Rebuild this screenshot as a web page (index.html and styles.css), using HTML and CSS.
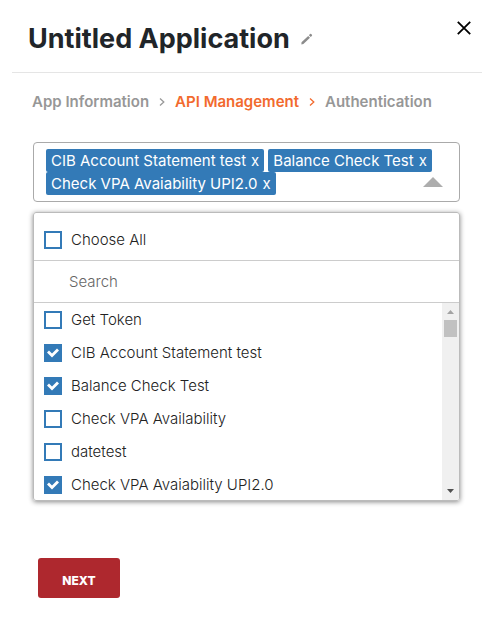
FILE: index.html
```html
<!DOCTYPE html>
<html lang="en">
<head>
<meta charset="utf-8">
<meta name="viewport" content="width=device-width, initial-scale=1">
<title>Untitled Application</title>
<link rel="stylesheet" href="styles.css">
</head>
<body>
<main class="dialog">
  <header class="header">
    <h1 class="title">Untitled Application</h1>
    <button class="icon-button edit" type="button" aria-label="Edit name">
      <svg width="12" height="12" viewBox="0 0 12 12"><path d="M0.5 9.2L7.2 2.9L9 4.8L2.4 11L0.4 11.4Z M7.9 2.2L9 1.1Q9.6 0.6 10.2 1.1L10.9 1.8Q11.4 2.4 10.8 3L9.7 4.1Z" fill="#8c8c8c"/></svg>
    </button>
    <button class="icon-button close" type="button" aria-label="Close">
      <svg width="14" height="14" viewBox="0 0 14 14"><path d="M0.8 0.8L13.2 13.2M13.2 0.8L0.8 13.2" stroke="#000" stroke-width="1.8"/></svg>
    </button>
  </header>
  <nav class="steps" aria-label="Steps">
    <a class="step" href="#info">App Information</a>
    <svg class="arrow" width="6" height="8" viewBox="0 0 6 8"><path d="M1 0.5L4.8 4L1 7.5" fill="none" stroke="currentColor" stroke-width="1.3"/></svg>
    <a class="step active" href="#api">API Management</a>
    <svg class="arrow active" width="6" height="8" viewBox="0 0 6 8"><path d="M1 0.5L4.8 4L1 7.5" fill="none" stroke="currentColor" stroke-width="1.3"/></svg>
    <a class="step" href="#auth">Authentication</a>
  </nav>
  <form class="form">
    <div class="select">
      <div class="chips">
        <span class="chip">CIB Account Statement test <button class="remove" type="button">x</button></span>
        <span class="chip">Balance Check Test <button class="remove" type="button">x</button></span>
        <span class="chip">Check VPA Avaiability UPI2.0 <button class="remove" type="button">x</button></span>
      </div>
      <button class="icon-button toggle" type="button" aria-label="Close list">
        <svg width="20" height="10" viewBox="0 0 20 10"><path d="M0 10L10 0L20 10Z" fill="#adadad"/></svg>
      </button>
    </div>
    <div class="panel">
      <label class="option all"><input class="box" type="checkbox">Choose All</label>
      <input class="search" type="text" placeholder="Search" aria-label="Search">
      <div class="list">
        <div class="options">
          <label class="option"><input class="box" type="checkbox">Get Token</label>
          <label class="option"><input class="box" type="checkbox" checked>CIB Account Statement test</label>
          <label class="option"><input class="box" type="checkbox" checked>Balance Check Test</label>
          <label class="option"><input class="box" type="checkbox">Check VPA Availability</label>
          <label class="option"><input class="box" type="checkbox">datetest</label>
          <label class="option"><input class="box" type="checkbox" checked>Check VPA Avaiability UPI2.0</label>
        </div>
        <div class="scrollbar" aria-hidden="true">
          <svg width="17" height="17" viewBox="0 0 17 17"><path d="M5 11L8.5 7L12 11Z" fill="#a3a3a3"/></svg>
          <div class="thumb"></div>
          <svg class="down" width="17" height="17" viewBox="0 0 17 17"><path d="M5 6L8.5 10L12 6Z" fill="#505050"/></svg>
        </div>
      </div>
    </div>
    <button class="next" type="button">NEXT</button>
  </form>
</main>
</body>
</html>
```
FILE: styles.css
```css
* {
  box-sizing: border-box;
}

body {
  margin: 0;
  background: #fff;
  color: #212529;
  font-family: Inter, "Liberation Sans", sans-serif;
  font-size: 15px;
}

button,
input {
  font: inherit;
}

.dialog {
  padding: 0 8px 0 12px;
}

.header {
  display: flex;
  align-items: center;
  height: 73px;
  padding: 6px 11px 0 16px;
  border-bottom: 1px solid #e5e5e5;
}

.title {
  margin: 0;
  font-size: 27px;
  font-weight: 700;
  line-height: 32px;
}

.icon-button {
  display: flex;
  padding: 0;
  border: 0;
  background: none;
}

.edit {
  margin-left: 11px;
}

.close {
  align-self: flex-start;
  margin: 15px 0 0 auto;
}

.steps {
  display: flex;
  align-items: center;
  gap: 10px;
  padding: 19px 0 0 20px;
  color: #999;
  line-height: 20px;
}

.step {
  color: #979797;
  font-weight: 600;
  text-decoration: none;
}

.active {
  color: #f26a2e;
}

.form {
  padding: 30px 22px 0 21px;
}

.select {
  display: flex;
  align-items: center;
  height: 60px;
  padding: 0 16px 0 12px;
  border: 1px solid #aaa;
  border-radius: 4px;
}

.chips {
  display: flex;
  flex: 1;
  flex-wrap: wrap;
  column-gap: 4px;
  margin-right: -16px;
}

.chip {
  display: flex;
  gap: 5px;
  padding: 0 5px;
  border-radius: 2px;
  background: #337ab7;
  color: #fff;
  font-weight: 400;
  line-height: 23px;
  white-space: nowrap;
}

.remove {
  padding: 0;
  border: 0;
  background: none;
  color: inherit;
}

.toggle {
  align-self: flex-end;
  margin-bottom: 14px;
}

.panel {
  margin-top: 10px;
  border: 1px solid #bbb;
  border-radius: 3px;
  box-shadow: 0 1px 5px #888;
  overflow: hidden;
}

.option {
  display: flex;
  align-items: center;
  gap: 9px;
  height: 33px;
  padding-left: 10px;
  color: #222;
  font-weight: 300;
}

.all {
  height: 48px;
  padding-top: 6px;
  border-bottom: 1px solid #ccc;
}

.box {
  width: 18px;
  height: 18px;
  margin: 0;
  appearance: none;
  border: 2px solid #337ab7;
  background: #fff;
}

.box:checked {
  background: #337ab7;
}

.box:checked::before {
  content: "";
  display: block;
  width: 14px;
  height: 14px;
  background: #fff;
  clip-path: polygon(1px 7px, 3px 5px, 6px 8px, 11px 3px, 13px 5px, 6px 12px);
}

.search {
  display: block;
  width: 100%;
  height: 42px;
  padding: 0 35px;
  border: 0;
  border-bottom: 1px solid #ccc;
  background: #fff;
  font-weight: 300;
}

.search::placeholder {
  color: #666;
}

.list {
  display: flex;
  height: 197px;
  overflow: hidden;
}

.options {
  flex: 1;
}

.scrollbar {
  display: flex;
  flex-direction: column;
  width: 17px;
  background: #f0f0f0;
}

.thumb {
  height: 17px;
  margin: 0 2px;
  background: #c1c1c1;
}

.down {
  margin-top: auto;
}

.next {
  display: block;
  width: 82px;
  height: 40px;
  margin: 57px 0 0 5px;
  padding: 4px 0 0;
  border: 0;
  border-radius: 3px;
  background: #ae282e;
  color: #fff;
  font-size: 12px;
  font-weight: 800;
}
```
